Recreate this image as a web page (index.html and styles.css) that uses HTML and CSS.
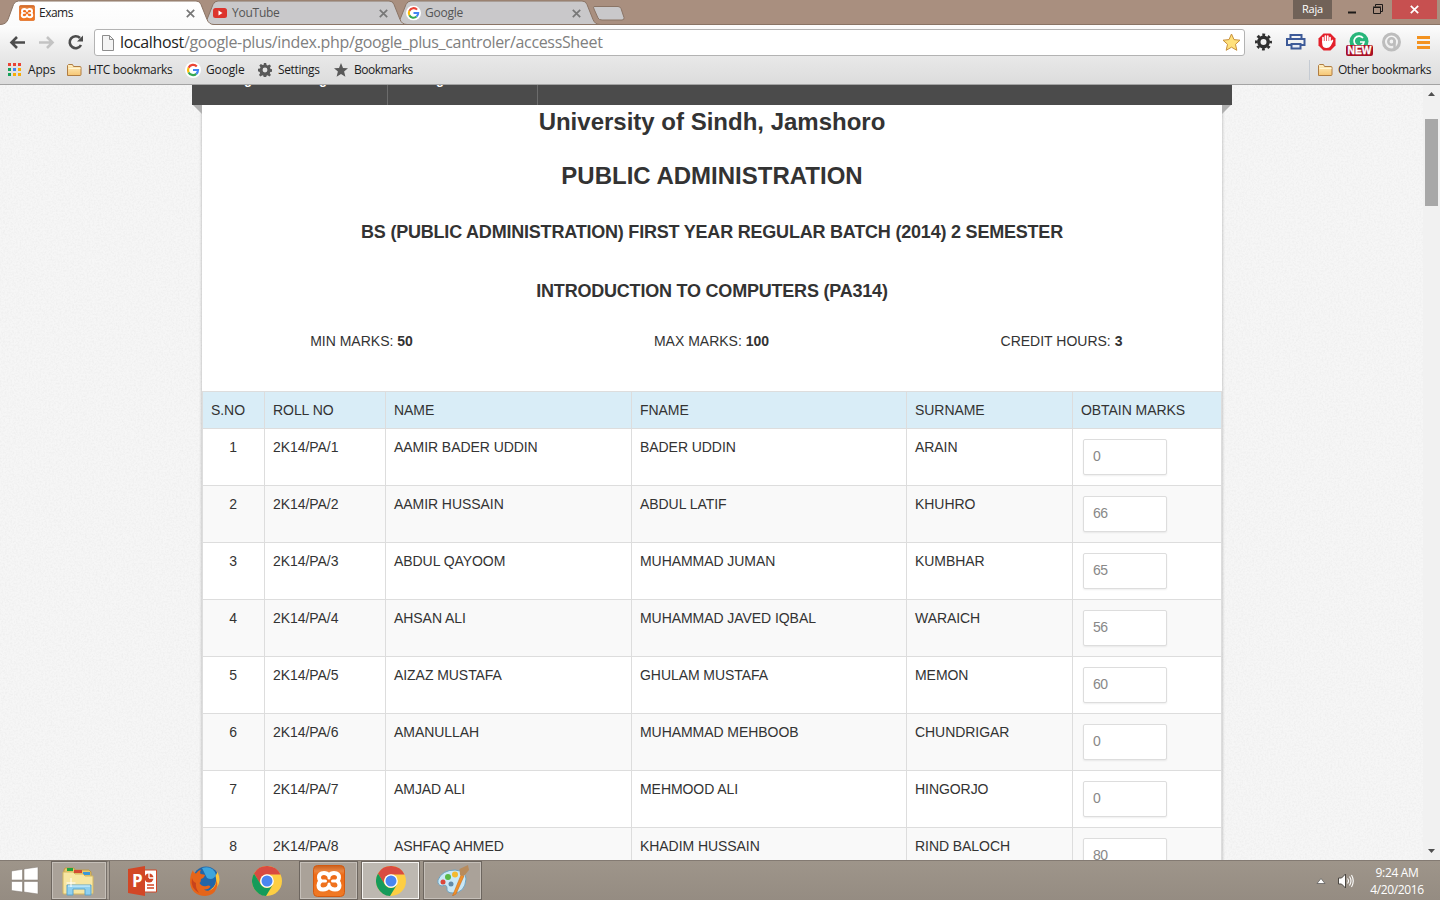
FILE: index.html
```html
<!DOCTYPE html>
<html lang="en">
<head>
<meta charset="utf-8">
<title>Exams</title>
<link rel="stylesheet" href="styles.css">
</head>
<body>
<svg class="defs" width="0" height="0">
  <defs>
    <linearGradient id="fold" x1="0" y1="0" x2="0" y2="1"><stop offset="0" stop-color="#fff0c4"/><stop offset="1" stop-color="#f6c673"/></linearGradient>
    <linearGradient id="xg" x1="0" y1="0" x2="0" y2="1"><stop offset="0" stop-color="#c9601f"/><stop offset=".18" stop-color="#ea8540"/><stop offset=".3" stop-color="#ee6a16"/><stop offset="1" stop-color="#f07a25"/></linearGradient>
    <linearGradient id="tabg" x1="0" y1="0" x2="0" y2="1"><stop offset="0" stop-color="#fff"/><stop offset="1" stop-color="#fbfbfb"/></linearGradient>
    <symbol id="google" viewBox="0 0 16 16"><circle cx="8" cy="8" r="8" fill="#fff"/><g fill="none" stroke-width="2.2"><path d="M11.8 4.4A5 5 0 0 0 3.6 5.7" stroke="#ea4335"/><path d="M3.6 5.7a5 5 0 0 0 0 4.7" stroke="#fbbc05"/><path d="M3.6 10.4a5 5 0 0 0 7.7 1.4" stroke="#34a853"/><path d="M11.3 11.8A5 5 0 0 0 13 8H8" stroke="#4285f4"/></g></symbol>
    <symbol id="folder" viewBox="0 0 16 14"><path d="M1.5 12.5v-10l1-1h4l1 2h6.5q1 0 1 1v7q0 1-1 1z" fill="url(#fold)" stroke="#b07d42"/><path d="M2.5 5.5h12" stroke="#fff5d4"/></symbol>
    <symbol id="gear" viewBox="0 0 16 16"><path fill-rule="evenodd" d="M6.7 0h2.6l.5 2.4 1.3.5 2-1.3 1.8 1.8-1.3 2 .5 1.3 2.3.5v2.6l-2.4.5-.5 1.3 1.3 2-1.8 1.8-2-1.3-1.3.5-.5 2.3H6.600l-.4-2.300-1.300-.5-2 1.300-1.800-1.800 1.300-2-.5-1.300L0 9.300V6.700l2.300-.5.5-1.300-1.300-2 1.800-1.800 2 1.300 1.200-.5zM8 5.200a2.800 2.800 0 1 0 0 5.600 2.800 2.800 0 0 0 0-5.600"/></symbol>
    <symbol id="xampp" viewBox="0 0 32 32"><rect x=".5" y=".5" width="31" height="31" rx="4" fill="url(#xg)" stroke="#d35a10"/><path d="M11 8q3 0 5 2.500Q18 8 21 8q5 0 5 4.500 0 2-1.500 3.500 2 2 2 4.200 0 4.300-4.500 4.300-4 0-6-3-2 3-6 3-4.500 0-4.500-4.300 0-2.200 2-4.200Q6 14.500 6 12.500 6 8 11 8z" fill="none" stroke="#fff" stroke-width="4" stroke-linejoin="round"/><path d="M8 16h4.500M24 16h-4.500M16 10v3M16 19v3" fill="none" stroke="#fff" stroke-width="3" stroke-linecap="round"/></symbol>
    <symbol id="chrome" viewBox="0 0 30 30"><circle cx="15" cy="15" r="15" fill="#fdce43"/><path d="M2 7.500A15 15 0 0 1 28.500 8.500H15A7 7 0 0 0 8.500 18.500z" fill="#d94b40"/><path d="M2 7.500A15 15 0 0 0 14 30L21 18.500A7 7 0 0 1 8.700 18.300z" fill="#159b5a"/><circle cx="15" cy="15" r="6.800" fill="#fff"/><circle cx="15" cy="15" r="5.500" fill="#4a86ef"/></symbol>
    <symbol id="close" viewBox="0 0 9 9"><path d="M.8.8l7.400 7.400M8.200.8L.8 8.200" stroke-width="1.700"/></symbol>
    <filter id="grain" x="0" y="0" width="100%" height="100%"><feTurbulence type="fractalNoise" baseFrequency=".55" numOctaves="3" seed="4"/><feColorMatrix values="0 0 0 0 .45  0 0 0 0 .45  0 0 0 0 .45  .22 0 0 0 -.08"/></filter>
  </defs>
</svg>

<header class="browser">
  <div class="tabstrip">
    <svg class="tabshapes" width="640" height="26">
      <path d="M393 24.500q5 0 7-5l6-15q1.500-3.500 5-3.500h171q4 0 5 3.500l6 15q2 5 7 5z" fill="#c9c8ca" stroke="#8a7465"/>
      <path d="M200 24.500q5 0 7-5l6-15q1.500-3.500 5-3.500h171q4 0 5 3.500l6 15q2 5 7 5z" fill="#c9c8ca" stroke="#8a7465"/>
      <path d="M594 6.500h24q2 0 3 2l3 9q.5 2.500-2 2.500h-20q-3 0-4-2l-4-9q-1-2.500 0-2.500z" fill="#c9c8ca" stroke="#8a7465"/>
      <path d="M0 24.500H640" stroke="#8a7465"/>
      <path d="M0 26v-1.500q6 0 8-5l5.500-15Q15 1 18.500 1H196q4 0 5 3.500l6 15q2 5 7 5V26z" fill="url(#tabg)"/>
      <path d="M0 24.500q6 0 8-5l5.500-15Q15 1 18.500 1H196q4 0 5 3.500l6 15q2 5 7 5" fill="none" stroke="#8a7465"/>
    </svg>
    <div class="tabs">
      <div class="tab active"><svg width="16" height="16"><use href="#xampp"/></svg><span>Exams</span><svg class="x" width="9" height="9"><use href="#close"/></svg></div>
      <div class="tab"><svg width="15" height="16"><rect y="3" width="14" height="10" rx="2.500" fill="#dc342d"/><path d="M5.500 5.500v5l4-2.500z" fill="#fff"/></svg><span class="t2">YouTube</span><svg class="x" width="9" height="9"><use href="#close"/></svg></div>
      <div class="tab"><svg width="15" height="16" viewBox="0 0 16 16"><use href="#google"/></svg><span class="t2">Google</span><svg class="x" width="9" height="9"><use href="#close"/></svg></div>
    </div>
    <div class="winctl">
      <span class="user">Raja</span>
      <svg width="60" height="19"><path d="M16 12.500h8" stroke="#1d1a19" stroke-width="2"/><path d="M43.500 6.500v-2h7v7h-2" fill="none" stroke="#1d1a19"/><path d="M41.500 7.500h7v6h-7zM41 7h8" fill="none" stroke="#1d1a19"/></svg>
      <span class="winclose"><svg width="9" height="9" stroke="#fff"><use href="#close"/></svg></span>
    </div>
  </div>
  <div class="toolbar">
    <svg class="nav" width="88" height="28" fill="none" stroke-width="2.600"><g stroke="#4c4c4c"><path d="M25 14.500H12M17 9L11.500 14.500l5.500 5.500"/></g><g stroke="#c3c3c3"><path d="M39 14.500h13M47 9l5.500 5.500-5.500 5.500"/></g><path d="M80 10a6 6 0 1 0 1 7" stroke="#4c4c4c"/><path d="M83 7.500v6h-6z" fill="#4c4c4c" stroke="none"/></svg>
    <div class="omnibox">
      <svg width="12" height="16"><path d="M.5.5h7l4 4v11H.5z" fill="#f4f4f4" stroke="#8d8d8d"/><path d="M7.500.5v4h4" fill="none" stroke="#8d8d8d"/></svg>
      <span class="url"><b>localhost</b>/google-plus/index.php/google_plus_cantroler/accessSheet</span>
      <svg class="star" width="19" height="19"><path d="M9.500 1l2.500 5.600 6 .6-4.500 4.100 1.300 6-5.300-3.100-5.300 3.100 1.300-6L1 7.200l6-.6z" fill="#ffe17c" stroke="#c8913d" stroke-linejoin="round"/></svg>
    </div>
    <svg class="exts" width="194" height="30">
      <g fill="none" stroke="#303030"><circle cx="18.500" cy="15" r="4.700" stroke-width="3.400"/><circle cx="18.500" cy="15" r="7.200" stroke-width="2.600" stroke-dasharray="2.800 2.855" stroke-dashoffset="1.400"/></g>
      <g fill="none" stroke="#3d5a98" stroke-width="2"><path d="M45.500 12V8h11v4M46.500 18H42v-6h17.500v6H55"/><path d="M46.500 17h9v4.500h-9z" fill="#e7ebf5"/></g>
      <path d="M78.500 6.500h7l5 5v7l-5 5h-7l-5-5v-7z" fill="#e3202b"/><path d="M78 15v-4.500M80.400 15V9M82.800 15V9M85 15v-4.500" stroke="#fff" stroke-width="1.700" stroke-linecap="round"/><path d="M77.200 14h8.600l1.700-1.500q1.300.5.500 2l-2.200 4.200Q84.500 21 81.700 21q-4.500 0-4.500-4.500z" fill="#fff"/>
      <circle cx="114" cy="14.500" r="9.500" fill="#28b67a"/><path d="M118 11a5 5 0 1 0 1 4h-4" fill="none" stroke="#fff" stroke-width="1.700"/><rect x="101" y="18" width="27" height="11" rx="2" fill="#a91024"/><text x="102.500" y="27" class="new" textLength="24" lengthAdjust="spacingAndGlyphs">NEW</text>
      <circle cx="146.500" cy="15" r="8" fill="none" stroke="#bdbdbd" stroke-width="3"/><circle cx="146.500" cy="14.500" r="3.200" fill="none" stroke="#bdbdbd" stroke-width="2.500"/><path d="M149.500 13v8" stroke="#bdbdbd" stroke-width="2.500"/>
      <path d="M172 10.500h13M172 15.500h13M172 20.500h13" stroke="#f3921f" stroke-width="3"/>
    </svg>
  </div>
  <nav class="bookmarks">
    <svg class="apps" width="14" height="14"><g fill="#ea4335"><path d="M0 0h3v3H0zM5 0h3v3H5zM10 0h3v3h-3z"/></g><path d="M0 5h3v3H0zM0 10h3v3H0z" fill="#16a15a"/><path d="M5 5h3v3H5z" fill="#4285f4"/><path d="M10 5h3v3h-3zM5 10h3v3H5zM10 10h3v3h-3z" fill="#f7ac08"/></svg><span class="bm1">Apps</span>
    <svg width="16" height="14"><use href="#folder"/></svg><span class="bm2">HTC bookmarks</span>
    <svg width="16" height="16"><use href="#google"/></svg><span class="bm3">Google</span>
    <svg width="14" height="14"><use href="#gear" fill="#595959"/></svg><span class="bm4">Settings</span>
    <svg width="14" height="14"><path d="M7 0l2 4.900 5 .4-3.900 3.300 1.300 5.200L7 11l-4.400 2.800 1.300-5.200L0 5.300l5-.4z" fill="#595959"/></svg><span class="bm5">Bookmarks</span>
    <div class="other"><svg width="16" height="14"><use href="#folder"/></svg><span>Other bookmarks</span></div>
  </nav>
</header>

<main class="viewport">
  <svg class="texture" width="1423" height="775"><rect width="1423" height="775" filter="url(#grain)"/></svg>
  <div class="column">
    <div class="menu"><div class="m1"><span>g</span><span>g</span></div><div class="m2"><span>g</span></div><i class="ear l"></i><i class="ear r"></i></div>
    <section class="sheet">
      <h1 class="h-a"><span>University of Sindh, Jamshoro</span></h1>
      <h1 class="h-b"><span>PUBLIC ADMINISTRATION</span></h1>
      <h2 class="h-c"><span>BS (PUBLIC ADMINISTRATION) FIRST YEAR REGULAR BATCH (2014) 2 SEMESTER</span></h2>
      <h2 class="h-d"><span>INTRODUCTION TO COMPUTERS (PA314)</span></h2>
      <div class="facts"><span>MIN MARKS: <b>50</b></span><span>MAX MARKS: <b>100</b></span><span>CREDIT HOURS: <b>3</b></span></div>
      <table class="marks">
        <colgroup><col class="c1"><col class="c2"><col class="c3"><col class="c4"><col class="c5"><col class="c6"></colgroup>
        <thead><tr><th>S.NO</th><th>ROLL NO</th><th>NAME</th><th>FNAME</th><th>SURNAME</th><th>OBTAIN MARKS</th></tr></thead>
        <tbody>
          <tr><td>1</td><td>2K14/PA/1</td><td>AAMIR BADER UDDIN</td><td>BADER UDDIN</td><td>ARAIN</td><td><div class="field">0</div></td></tr>
          <tr><td>2</td><td>2K14/PA/2</td><td>AAMIR HUSSAIN</td><td>ABDUL LATIF</td><td>KHUHRO</td><td><div class="field">66</div></td></tr>
          <tr><td>3</td><td>2K14/PA/3</td><td>ABDUL QAYOOM</td><td>MUHAMMAD JUMAN</td><td>KUMBHAR</td><td><div class="field">65</div></td></tr>
          <tr><td>4</td><td>2K14/PA/4</td><td>AHSAN ALI</td><td>MUHAMMAD JAVED IQBAL</td><td>WARAICH</td><td><div class="field">56</div></td></tr>
          <tr><td>5</td><td>2K14/PA/5</td><td>AIZAZ MUSTAFA</td><td>GHULAM MUSTAFA</td><td>MEMON</td><td><div class="field">60</div></td></tr>
          <tr><td>6</td><td>2K14/PA/6</td><td>AMANULLAH</td><td>MUHAMMAD MEHBOOB</td><td>CHUNDRIGAR</td><td><div class="field">0</div></td></tr>
          <tr><td>7</td><td>2K14/PA/7</td><td>AMJAD ALI</td><td>MEHMOOD ALI</td><td>HINGORJO</td><td><div class="field">0</div></td></tr>
          <tr><td>8</td><td>2K14/PA/8</td><td>ASHFAQ AHMED</td><td>KHADIM HUSSAIN</td><td>RIND BALOCH</td><td><div class="field">80</div></td></tr>
        </tbody>
      </table>
    </section>
  </div>
  <div class="scrollbar"><svg width="17" height="34"><path d="M5 11l3.500-4 3.500 4z" fill="#505050"/></svg><div class="thumb"></div><svg class="down" width="17" height="17"><path d="M5 6l3.500 4L12 6z" fill="#505050"/></svg></div>
</main>

<footer class="taskbar">
  <div class="start"><svg width="28" height="27"><path d="M.5 4l11-1.700V13H.5zM13 2l14-2v13H13zM.5 14.500h11V25l-11-1.500zM13 14.500h14V27l-14-2z" fill="#fff" stroke="#7e776f" stroke-width=".5"/></svg></div>
  <div class="task open stacked"><svg width="32" height="30"><path d="M2 4l1-2h9l1 2h14l2 2v21H2z" fill="#e8c869" stroke="#bd9b48"/><path d="M5 2h6v3H5z" fill="#22a33c"/><path d="M12 4h8v3h-8z" fill="#d44a32"/><path d="M21 6h7v3h-7z" fill="#3b98d8"/><path d="M1 6h10l2 2h8l2 2h8v17q0 1-1 1H2q-1 0-1-1z" fill="#f7e6a2" stroke="#d5b860"/><path d="M5 29V19h24v10h-6v-6H11v6z" fill="#8fd0f0" stroke="#5ca4cb"/><path d="M6 20h22" stroke="#e0f7ff"/><path d="M9 12v9M4.500 17h9" stroke="#fff"/></svg></div>
  <div class="task"><svg width="31" height="30"><path d="M17 4h12.500v22H17z" fill="#fff" stroke="#d24726"/><circle cx="22" cy="12" r="4.500" fill="#d24726"/><path d="M22 12V7M22 12h5" stroke="#fff" stroke-width="1.300"/><path d="M20 19h7M20 22h7" stroke="#d24726" stroke-width="1.500"/><path d="M1 3l17-3v30L1 27z" fill="#d24726"/><text x="5" y="21" class="pp">P</text></svg></div>
  <div class="task"><svg width="30" height="30"><circle cx="16" cy="13.500" r="13" fill="#2166a8"/><path d="M12 2q11-3 14 7-3 6-9 3z" fill="#3fa5dc"/><path d="M27.500 6q4.500 9-1 16-5 7-13 7 6-4 10-8 4-5 2-11z" fill="#ffc53a"/><path d="M3 4q0 2.500 3 3.500 2-3 5-4-1.500 2.500-.5 4.500 4 0 4.500 1.500-1 2.500-4 3.500 0 3-1.500 4 2.500 4 7 3 2.500-1 4 .5-2 3.500-6.500 3 4 3 9-1 4-4 3-9 2.500 5 .5 9-3 7-11 7.500Q1 29.500 0 16 0 9 3 4z" fill="#e5651a"/><path d="M2 12q-2 10 7 15-4-6-3-10-3-1-4-5z" fill="#c8431c"/></svg></div>
  <div class="task"><svg width="30" height="30"><use href="#chrome"/></svg></div>
  <div class="task open"><svg width="32" height="32"><use href="#xampp"/></svg></div>
  <div class="task open current"><svg width="30" height="30"><use href="#chrome"/></svg></div>
  <div class="task open paint"><svg width="32" height="31"><path d="M1 15Q5 5 18 5q11 1 11 9-1 14-13 14-7 0-6-5 0-4-5-2-5-1-4-6z" fill="#c9e8f7" stroke="#6ea3c2"/><circle cx="6" cy="17" r="2.500" fill="#dc463a"/><circle cx="11" cy="12" r="3" fill="#58b847"/><circle cx="18" cy="9.500" r="3" fill="#f4ba2f"/><circle cx="14" cy="19" r="2.500" fill="#638ba8"/><path d="M16 29.500l8-19.500 3 1-8 18-3.500 2z" fill="#f29028" stroke="#bd661c" stroke-width=".5"/><path d="M23 10l-.5-6L31 0l1 5-5 6z" fill="#b78b5c"/></svg></div>
  <div class="tray">
    <svg width="38" height="20"><path d="M1 12.500l4-5 4 5z" fill="#fff" stroke="#555" stroke-width=".7"/><path d="M22.500 7h3l4-4v14l-4-4h-3z" fill="#fff" stroke="#4c4843"/><path d="M31.500 7.500q2 2.500 0 5M33.500 5.500q3 4.500 0 9M35.500 4q3.500 6 0 12" fill="none" stroke="#fff" stroke-width="1.100"/></svg>
    <div class="clock"><span class="time">9:24 AM</span><span class="date">4/20/2016</span></div>
  </div>
</footer>
</body>
</html>
```
FILE: styles.css
```css
* { box-sizing: border-box; }
body { margin: 0; width: 1440px; height: 900px; overflow: hidden; display: flex; flex-direction: column; font: 12px "Open Sans", "Noto Sans", sans-serif; color: #1c1c1c; }
svg { display: block; flex: none; }
.defs { position: absolute; }
span { white-space: nowrap; }

.browser { height: 85px; flex: none; border-bottom: 1px solid #a3a3a3; background: linear-gradient(#fdfdfd 25px, #e9e9e9 55px, #dcdcdc 84px); }
.tabstrip { position: relative; height: 25px; display: flex; justify-content: space-between; background: #a98f7f; border-bottom: 1px solid #8a7465; }
.tabshapes { position: absolute; left: 0; top: 0; }
.tabs { position: relative; display: flex; padding-left: 19px; }
.tab { width: 193px; height: 25px; padding-right: 17px; display: flex; align-items: center; color: #555; stroke: none; }
.tab:not(.active) > svg:first-child { margin-left: 1px; }
.tab span { margin-left: 4px; letter-spacing: -.5px; }
.tab .t2 { letter-spacing: -.25px; margin-left: 4px; }
.tab.active { color: #222; }
.tab .x { margin-left: auto; stroke: #777; margin-top: 1px; }
.winctl { display: flex; align-items: flex-start; padding-right: 3px; }
.user { width: 39px; height: 19px; background: #716258; color: #fff; text-align: center; font-size: 11px; line-height: 18px; letter-spacing: -.2px; }
.winclose { width: 45px; height: 19px; display: flex; align-items: center; justify-content: center; background: #c75050; }

.toolbar { height: 34px; display: flex; align-items: center; }
.nav { margin-right: 6px; }
.omnibox { width: 1151px; height: 27px; margin-top: 1px; padding: 0 3px 0 7px; display: flex; align-items: center; background: #fff; border: 1px solid #b3b3b3; border-radius: 3px; }
.url { margin: 0 0 2px 6px; font-size: 16px; line-height: 24px; letter-spacing: -.34px; color: #808080; }
.url b { font-weight: 400; color: #222; }
.star { margin-left: auto; }
.new { font: bold 10px "Liberation Sans", Arial, sans-serif; fill: #fff; stroke: #fff; stroke-width: .3px; }

.bookmarks { height: 22px; padding: 0 0 1px 8px; display: flex; align-items: center; }
.bookmarks span { margin-left: 5px; letter-spacing: -.36px; }
.bookmarks .bm1 { width: 38px; margin-left: 6px; letter-spacing: -.2px; }
.bookmarks .bm2 { width: 97px; margin-left: 6px; }
.bookmarks .bm3 { width: 52px; margin-left: 5px; letter-spacing: -.15px; }
.bookmarks .bm4 { width: 56px; margin-left: 6px; }
.bookmarks .bm5 { margin-left: 6px; letter-spacing: -.5px; }
.other { margin-left: auto; height: 20px; padding: 0 9px 0 7px; border-left: 1px solid #c5cbd3; display: flex; align-items: center; }

.viewport { position: relative; flex: none; height: 775px; overflow: hidden; display: flex; justify-content: space-between; background: #f6f6f6; font-family: "Liberation Sans", Arial, sans-serif; }
.texture { position: absolute; left: 0; top: 0; }
.column { position: relative; width: 1040px; margin-left: 192px; }
.menu { position: relative; height: 20px; display: flex; background: #4b4b4b; color: #fff; font: bold 13px "Liberation Sans", Arial, sans-serif; }
.menu .m1, .menu .m2 { height: 20px; overflow: hidden; border-right: 1px solid #6c6c6c; display: flex; }
.menu .m1 { width: 196px; padding-left: 52px; gap: 67px; }
.menu .m2 { width: 150px; padding-left: 48px; }
.menu span { display: block; width: 8px; height: 15px; margin-top: -13px; line-height: 15px; }
.ear { position: absolute; top: 20px; border-top: 9px solid #b0b0b0; }
.ear.l { left: 1px; border-left: 9px solid transparent; }
.ear.r { right: 1px; border-right: 9px solid transparent; }
.sheet { width: 1020px; height: 800px; margin-left: 10px; background: #fff; box-shadow: 0 0 3px rgba(0,0,0,.3); color: #333; text-align: center; }
.sheet h1, .sheet h2 { margin: 0; }
.sheet h1 { font-size: 24px; }
.sheet h2 { font-size: 18px; letter-spacing: -.21px; }
.h-a { line-height: 34px; height: 44px; }
.h-b { line-height: 54px; height: 54px; }
.h-c { line-height: 58px; height: 58px; }
.h-d { line-height: 60px; height: 60px; }
.facts { height: 70px; padding-top: 10px; display: flex; font-size: 14px; line-height: 20px; }
.facts span { width: 351px; }
.facts span:first-child, .facts span:last-child { width: 319px; }
.facts span:nth-child(2) { width: 381px; }
.marks { width: 1020px; table-layout: fixed; border-collapse: collapse; font-size: 14px; line-height: 20px; letter-spacing: -.06px; text-align: left; }
.c1 { width: 62px; } .c2 { width: 121px; } .c3 { width: 246px; } .c4 { width: 275px; } .c5 { width: 166px; } .c6 { width: 149px; }
.marks th, .marks td { border: 1px solid #ddd; padding: 8px; font-weight: 400; vertical-align: top; white-space: nowrap; }
.marks th { height: 37px; background: #d9edf7; }
.marks td { height: 57px; }
.marks td:first-child { text-align: center; padding-right: 9px; }
.marks tbody tr:nth-child(even) { background: #f9f9f9; }
.field { width: 84px; height: 36px; margin: 2px; padding: 0 9px; color: #888; background: #fff; border: 1px solid #ddd; border-radius: 2px; box-shadow: 0 1px 2px rgba(0,0,0,.07); font: 14px/33px "Liberation Sans", Arial, sans-serif; letter-spacing: -.5px; }
.scrollbar { position: relative; width: 17px; display: flex; flex-direction: column; align-items: center; background: #f1f1f1; }
.thumb { width: 13px; height: 87px; background: #a8a8a8; }
.down { margin-top: auto; }

.taskbar { height: 40px; flex: none; display: flex; align-items: center; background: linear-gradient(#9e958a, #958c82); border-top: 1px solid #837a72; }
.start { width: 51px; padding-left: 11px; }
.task { width: 59px; height: 39px; margin-right: 3px; display: flex; align-items: center; justify-content: center; }
.task.open { border: 1px solid #6d665f; background: #aaa299; box-shadow: inset 0 0 0 1px #c5bfb8; }
.task.current { background: #bdb8b1; box-shadow: inset 0 0 0 1px #f5f3f0; }
.task.stacked { padding-right: 2px; border-right: 4px double #77706a; }
.pp { font: bold 17px "Open Sans", sans-serif; fill: #fff; }
.tray { margin-left: auto; display: flex; align-items: center; color: #fff; }
.clock { width: 86px; display: flex; flex-direction: column; align-items: center; line-height: 17px; letter-spacing: -.35px; }
```
